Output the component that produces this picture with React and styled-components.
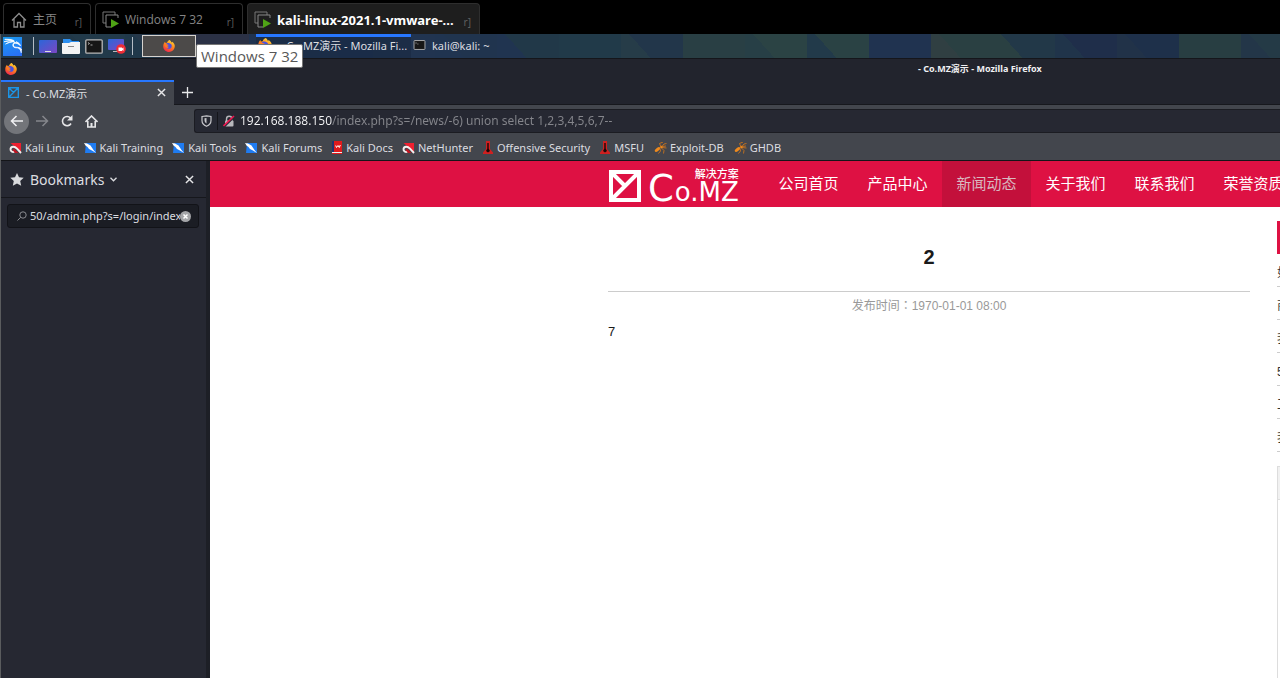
import React from "react";
import styled, { createGlobalStyle, css } from "styled-components";
import { SiKalilinux } from "react-icons/si";

const UI = '"Noto Sans", "Noto Sans CJK SC", sans-serif';
const HOST = '"Open Sans", "Noto Sans CJK SC", sans-serif';
const WEB = '"Liberation Sans", "Noto Sans CJK SC", sans-serif';

const GlobalStyle = createGlobalStyle`
  * { box-sizing: border-box; }
  body { margin: 0; background: #000; font-family: ${UI}; overflow: hidden; }
  button, input { font: inherit; color: inherit; border: 0; margin: 0; padding: 0; background: none; }
  h1, h2, p, ul { margin: 0; padding: 0; }
  ul { list-style: none; }
  a { color: inherit; text-decoration: none; }
  svg { display: block; flex: none; }
`;

/* ---------- host window ---------- */

const Screen = styled.div`
  display: flex;
  flex-direction: column;
  height: 100vh;
  min-height: 480px;
  overflow: hidden;
`;

const HostTabs = styled.nav`
  display: flex;
  flex: none;
  gap: 4px;
  height: 34px;
  padding: 3px 3px 0;
  background: #000;
  font-family: ${HOST};
`;

const HostTab = styled.button`
  display: flex;
  align-items: center;
  gap: 5px;
  width: ${(p) => p.$width}px;
  padding: 1px 8px 0 6px;
  border: 1px solid #2e2e2e;
  border-bottom: 0;
  border-radius: 4px 4px 0 0;
  background: ${(p) => (p.$active ? "#1e1e1e" : "#000")};
  color: ${(p) => (p.$active ? "#fff" : "#858585")};
  font-family: ${(p) => (p.$active ? UI : HOST)};
  font-size: ${(p) => (p.$active ? 13 : 12)}px;
  font-weight: ${(p) => (p.$active ? 700 : 400)};
  line-height: 30px;
  white-space: nowrap;
`;

const PinMark = styled.span`
  margin-left: auto;
  padding-top: 4px;
  color: #5e5e5e;
  font-size: 10px;
  font-weight: 400;
`;

/* ---------- guest desktop ---------- */

const Guest = styled.div`
  position: relative;
  display: flex;
  flex: 1;
  flex-direction: column;
  min-height: 0;
  border-left: 1px solid #5a5c5e;
  background: #23252e;
  color: #dcdde0;
`;

/* Wallpaper seen through the panel: each tile is split by a diagonal near its left edge. */
const tiles = [
  ["#22394a", "#22384a"], ["#213848", "#223a4a"], ["#20384a", "#26384a"],
  ["#2b3145", "#2b3145"], ["#203350", "#1f3350"], ["#1f3350", "#1e3252"],
  ["#1f3350", "#213450"], ["#203450", "#20344e"], ["#203450", "#213848"],
  ["#213a49", "#213a49"], ["#263c48", "#22364a"], ["#293f44", "#293f44"],
  ["#273f46", "#2b4344"], ["#223a4a", "#2a4244"], ["#203350", "#203350"],
  ["#303f42", "#2a4042"], ["#2a4042", "#223848"], ["#20344a", "#1f2e4a"],
  ["#213248", "#1e304a"], ["#283e42", "#283e42"], ["#233648", "#243a46"],
];

const Panel = styled.div`
  position: relative;
  display: flex;
  flex: none;
  align-items: center;
  height: 24px;
  font-size: 11px;
  background-color: #243a46;
  background-image: ${tiles.map(([l, r]) => `linear-gradient(48deg, ${l} 22px, ${r} 22px)`).join(", ")};
  background-size: 62px 24px;
  background-repeat: no-repeat;
  background-position: ${tiles.map((_, i) => `${i * 62}px 0`).join(", ")};
`;

const Launchers = styled.div`
  display: flex;
  align-items: center;
  width: 141px;
  padding-left: 2px;
`;

const KaliButton = styled.button`
  display: grid;
  place-items: center;
  width: 19px;
  height: 19px;
  margin-right: 11px;
  background: linear-gradient(160deg, #1a9bf0, #2a6cf5);
  color: #fff;
`;

const Divider = styled.span`
  width: 1px;
  height: 18px;
  background: #b4bcc4;
`;

const Apps = styled.div`
  display: flex;
  gap: 5px;
  padding: 0 6px 0 5px;
`;

const IconButton = styled.button`
  display: grid;
  place-items: center;
`;

const PagerButton = styled.button`
  display: grid;
  place-items: center;
  width: 54px;
  height: 22px;
  margin-right: 60px;
  border: 1px solid #d6d3cf;
  background: #4c4a49;
`;

const Task = styled.button`
  display: flex;
  align-items: center;
  gap: ${(p) => (p.$active ? 8 : 6)}px;
  height: 24px;
  padding: 0 0 2px 2px;
  white-space: nowrap;
  ${(p) => p.$active && css`
    width: 155px;
    background: rgba(20, 34, 54, 0.35);
    box-shadow: inset 0 3px #2777ff;
  `}
`;

const Tooltip = styled.div`
  position: absolute;
  z-index: 2;
  top: 10px;
  left: 195px;
  padding: 0 4px;
  border: 1px solid #767676;
  border-radius: 2px;
  background: #fff;
  color: #575757;
  font-family: ${HOST};
  font-size: 15px;
  line-height: 22px;
  white-space: nowrap;
`;

/* ---------- browser ---------- */

const TitleBar = styled.header`
  display: flex;
  flex: none;
  align-items: center;
  height: 22px;
  padding: 0 0 1px 4px;
  border-top: 1px solid #15161b;
  background: #22242d;
  white-space: nowrap;
`;

const WindowTitle = styled.h1`
  margin-left: 901px;
  color: #f0f0f2;
  font-size: 9px;
  font-weight: 700;
  line-height: 20px;
`;

const TabStrip = styled.div`
  display: flex;
  flex: none;
  height: 25px;
  border-bottom: 1px solid #17181d;
  background: #22242d;
`;

const BrowserTab = styled.div`
  display: flex;
  align-items: center;
  gap: 7px;
  width: 173px;
  height: 25px;
  padding: 0 8px 2px 7px;
  border-top: 2px solid #2777ff;
  background: #43464d;
  font-size: 11px;
`;

const TabLabel = styled.span`
  flex: 1;
`;

const NewTab = styled(IconButton)`
  width: 27px;
`;

const NavBar = styled.div`
  display: flex;
  flex: none;
  align-items: center;
  height: 32px;
  padding-left: 3px;
  background: #43464d;
`;

const NavButtons = styled.div`
  display: flex;
  align-items: center;
  gap: 12px;
  width: 190px;
`;

const BackButton = styled(IconButton)`
  width: 25px;
  height: 25px;
  margin-right: -6px;
  border-radius: 50%;
  background: #73757a;
`;

const AddressBar = styled.form`
  display: flex;
  flex: 1;
  align-items: center;
  height: 24px;
  padding-left: 6px;
  border: 1px solid #1b1c22;
  border-right: 0;
  border-radius: 3px 0 0 3px;
  background: #262832;
`;

const ShieldCell = styled.span`
  display: flex;
  align-items: center;
  width: 17px;
  height: 18px;
  margin-right: 5px;
  border-right: 1px solid #14151a;
`;

const Address = styled.input`
  flex: 1;
  min-width: 0;
  margin-left: 5px;
  outline: none;
  color: #f4f4f6;
  font-size: 12px;
  line-height: 20px;
  background: linear-gradient(to right, #f4f4f6 92px, #85868c 92px);
  background-clip: text;
  -webkit-text-fill-color: transparent;
`;

const BookmarksBar = styled.nav`
  display: flex;
  flex: none;
  gap: 9px;
  height: 24px;
  padding: 0 0 2px 8px;
  border-bottom: 1px solid #141519;
  background: #43464d;
  font-size: 11px;
`;

const Bookmark = styled.a`
  display: flex;
  align-items: center;
  gap: 3px;
  white-space: nowrap;
`;

const Body = styled.div`
  display: flex;
  flex: 1;
  min-height: 0;
`;

const Sidebar = styled.aside`
  flex: none;
  width: 209px;
  border-right: 4px solid #1d1f26;
  background: #262832;
`;

const SidebarHeader = styled.div`
  display: flex;
  align-items: center;
  height: 37px;
  padding: 0 12px 0 9px;
  border-bottom: 1px solid #16171c;
`;

const SidebarSwitch = styled.button`
  display: flex;
  flex: 1;
  align-items: center;
  gap: 6px;
  font-size: 14px;
`;

const SearchBox = styled.label`
  display: flex;
  align-items: center;
  height: 24px;
  margin: 6px 7px 6px 6px;
  padding: 0 7px 0 9px;
  border: 1px solid #121318;
  border-radius: 3px;
  background: #1b1d24;
`;

const SearchInput = styled.input`
  flex: 1;
  min-width: 0;
  margin-left: 3px;
  outline: none;
  font-size: 11px;
  line-height: 20px;
`;

/* ---------- web site ---------- */

const Page = styled.main`
  flex: 1;
  min-width: 0;
  overflow: hidden;
  background: #fff;
  color: #1a1a1a;
  font-family: ${WEB};
`;

const SiteHeader = styled.header`
  display: flex;
  align-items: center;
  height: 46px;
  padding-left: 398px;
  background: #de1143;
  color: #fff;
`;

const Logo = styled.a`
  display: flex;
  flex: none;
  align-items: center;
  gap: 7px;
  width: 156px;
  padding: 4px 0 0 1px;
`;

const Brand = styled.span`
  display: flex;
  align-items: last baseline;
  gap: 1px;
  font-family: "DejaVu Sans", "Noto Sans CJK SC", sans-serif;
`;

const Initial = styled.span`
  font-size: 37px;
  line-height: 33px;
`;

const BrandStack = styled.span`
  display: flex;
  flex-direction: column;
  font-size: 26px;
  line-height: 22px;
`;

const Tagline = styled.span`
  align-self: flex-end;
  font-size: 11px;
  font-weight: 500;
  line-height: 13px;
`;

const SiteNav = styled.nav`
  display: flex;
  height: 100%;
`;

const SiteLink = styled.a`
  flex: none;
  width: 89px;
  font-size: 15px;
  line-height: 46px;
  text-align: center;
  background: ${(p) => (p.$active ? "#c3103b" : "transparent")};
  color: ${(p) => (p.$active ? "#d9b9c0" : "#fff")};
`;

const Columns = styled.div`
  display: flex;
  align-items: flex-start;
  gap: 27px;
  padding: 14px 0 0 398px;
`;

const Article = styled.article`
  flex: none;
  width: 642px;
  padding-top: 22px;
`;

const Heading = styled.h2`
  padding-bottom: 20px;
  border-bottom: 1px solid #ccc;
  font-size: 20px;
  line-height: 28px;
  text-align: center;
`;

const Meta = styled.p`
  color: #999;
  font-family: "Liberation Sans", "Noto Sans CJK TC", sans-serif;
  font-size: 12px;
  line-height: 28px;
  text-align: center;
`;

const Content = styled.p`
  font-size: 13px;
  line-height: 24px;
`;

const Aside = styled.aside`
  flex: none;
  width: 283px;
`;

const AsideTitle = styled.div`
  height: 33px;
  background: #de1143;
`;

const AsideItem = styled.li`
  height: 33px;
  border-bottom: 1px dashed #ccc;
  color: #333;
  font-size: 12px;
  line-height: 39px;
`;

const AsideCard = styled.section`
  height: 300px;
  margin-top: 14px;
  border: 1px solid #ddd;
`;

const AsideCardHead = styled.div`
  height: 33px;
  border-bottom: 1px solid #ddd;
  background: #f1f1f1;
`;

/* ---------- drawings ---------- */

const HomeOutline = () => (
  <svg width="18" height="16" viewBox="-1 0 18 16" fill="none" stroke="#8c8c8c" strokeWidth="1.3">
    <path d="M1 8.500 8 1.500l7 7M3 7v8h3.500v-4.500h3V15H13V7" />
  </svg>
);

const VmIcon = () => (
  <svg width="18" height="18" viewBox="0 0 18 18">
    <path d="M13 4V1H1v11h3" fill="none" stroke="#777" />
    <path d="M16 7V4H4v12h5" fill="none" stroke="#888" />
    <path d="m9 8 8 4.500-8 4.500z" fill="#4fa316" />
  </svg>
);

const Firefox = ({ size = 12, id }) => (
  <svg width={size} height={size} viewBox="0 0 24 24">
    <defs>
      <linearGradient id={id} x1="0.8" y1="0" x2="0.3" y2="1">
        <stop offset="0" stopColor="#ffe23d" />
        <stop offset="0.45" stopColor="#ff8a1c" />
        <stop offset="1" stopColor="#f0284e" />
      </linearGradient>
    </defs>
    <path d="M13.500 0c2 2 3 3.500 3.500 5.200 1-.6 1.300-1.600 1.300-1.600C22 6 24 9.500 23.500 13.500 22.800 19.500 18 23.800 12 23.800S.5 19 .5 12.800C.5 9 1.800 5.500 4 3.500L5 6l3-.4c1-3 3-5 5.500-5.600z" fill={`url(#${id})`} />
    <path d="M6 9c.5-2.500 4-3.500 7-2.500 4 1.300 5.500 4.500 4 8-1.500 3-5 4-8 2.500-2-1-3-3-2.400-4.500 1.500 1 3.500.8 4.800-.4-2 .1-4.300-.8-5.400-3.100z" fill="#4a52e0" />
    <path d="M2 9c2-2 4-2 6-.5l3.500 1.500c-.5 1.200-2 1.500-3 1.800.5 2.200 1.500 3.200 3.500 2.700-2 2.500-6.500 1.500-8-2" fill="#ff7a20" />
  </svg>
);

const Desktop = () => (
  <svg width="18" height="15" viewBox="0 0 18 15">
    <defs>
      <linearGradient id="desk" x2="1" y2="1">
        <stop offset="0" stopColor="#2c66d8" />
        <stop offset="1" stopColor="#7b46c4" />
      </linearGradient>
    </defs>
    <rect y="1" width="18" height="13" rx="1" fill="url(#desk)" />
    <path d="M6 12.500h6" stroke="#ddd" />
  </svg>
);

const Folder = () => (
  <svg width="18" height="15" viewBox="0 0 18 15">
    <path d="M1 0h7l2 2h7v6H1z" fill="#2c8ff0" />
    <path d="M0 4h7l2-1h9v11a1 1 0 0 1-1 1H1a1 1 0 0 1-1-1z" fill="#f4f4f4" />
    <path d="M6 7.500h6" stroke="#888" />
  </svg>
);

const Terminal = ({ width = 18, height = 15 }) => (
  <svg width={width} height={height} viewBox="0 0 18 15">
    <rect x=".8" y=".8" width="16.400" height="13.400" rx="1" fill="#161616" stroke="#b9b9b9" strokeWidth="1.300" />
    <path d="m3 3.500 1.500 1L3 5.500M5.500 6h2" fill="none" stroke="#ccc" strokeWidth=".8" />
  </svg>
);

const Recorder = () => (
  <svg width="18" height="16" viewBox="0 0 18 16">
    <rect y="1" width="16" height="11" rx="1" fill="url(#desk)" />
    <path d="M5 13.500h5" stroke="#bbb" />
    <circle cx="13" cy="11" r="4.800" fill="#ee2c36" />
    <path d="M10.500 9.500h3.500v1l1.500-1v3.500l-1.500-1v1h-3.500z" fill="#fff" />
  </svg>
);

const SiteMark = ({ size, color, thick }) => (
  <svg width={size} height={size} viewBox="0 0 32 32" fill="none" stroke={color} strokeWidth={thick}>
    <path d="M2 2h28v28H2zM3 3l13 13M29 3 3 29" />
  </svg>
);

const Cross = () => (
  <svg width="9" height="9" viewBox="0 0 10 10" stroke="#e6e6e8" strokeWidth="1.600">
    <path d="m1 1 8 8M9 1 1 9" />
  </svg>
);

const Plus = () => (
  <svg width="11" height="11" viewBox="0 0 11 11" stroke="#e8e8ea" strokeWidth="1.300">
    <path d="M5.500 0v11M0 5.500h11" />
  </svg>
);

const Arrow = ({ color, flip }) => (
  <svg width="14" height="12" viewBox="0 0 14 12" fill="none" stroke={color} strokeWidth="1.500">
    <path d={flip ? "M1 6h11.500M7.500 1l5 5-5 5" : "M13 6H1.500M6.500 1l-5 5 5 5"} />
  </svg>
);

const Reload = () => (
  <svg width="12" height="12" viewBox="0 0 12 12" fill="none" stroke="#e6e6e8" strokeWidth="1.600">
    <path d="M10 8.500A4.600 4.600 0 1 1 9.500 3" />
    <path d="M11.500 0v5.500H6z" fill="#e6e6e8" stroke="none" />
  </svg>
);

const Home = () => (
  <svg width="13" height="13" viewBox="0 0 13 13" fill="none" stroke="#e6e6e8" strokeWidth="1.600">
    <path d="m.5 7 6-6 6 6M2.800 6v6h7.400V6" />
    <path d="M6.500 12V8" strokeWidth="2" />
  </svg>
);

const Shield = () => (
  <svg width="11" height="12" viewBox="0 0 11 12" fill="none" stroke="#c8c8cc" strokeWidth="1.200">
    <path d="M1 1.500 5.500.8l4.500.7v4c0 3-2 4.800-4.500 5.800C3 10.300 1 8.500 1 5.500z" />
    <path d="M5.500 3v5.500C4 7.500 3.500 6.500 3.500 5V3.300z" fill="#c8c8cc" stroke="none" />
  </svg>
);

const BrokenLock = () => (
  <svg width="12" height="12" viewBox="0 0 12 12">
    <path d="M3.500 6V4a2.700 2.700 0 0 1 5.400 0v2" fill="none" stroke="#b8b8bc" strokeWidth="1.400" />
    <rect x="2" y="5.500" width="8.500" height="6" rx="1" fill="#b8b8bc" />
    <path d="M1.500 11.500 12 1.500" stroke="#262832" strokeWidth="1.500" />
    <path d="M.5 11 11 1" stroke="#ee1650" strokeWidth="1.600" />
  </svg>
);

const Star = () => (
  <svg width="14" height="13" viewBox="0 0 14 13">
    <path d="m7 0 2 4.300 4.700.5-3.500 3.200 1 4.700L7 10.400l-4.200 2.300 1-4.700L.3 4.800 5 4.300z" fill="#d9dadd" />
  </svg>
);

const Chevron = () => (
  <svg width="7" height="5" viewBox="0 0 7 5" fill="none" stroke="#dcdde0" strokeWidth="1.300">
    <path d="m.5.8 3 3 3-3" />
  </svg>
);

const Lens = () => (
  <svg width="10" height="10" viewBox="0 0 10 10" fill="none" stroke="#8b8c91">
    <circle cx="6" cy="4" r="3.200" />
    <path d="M3.700 6.300.5 9.500" />
  </svg>
);

const ClearIcon = () => (
  <svg width="11" height="11" viewBox="0 0 11 11">
    <circle cx="5.500" cy="5.500" r="5.500" fill="#a4a5a8" />
    <path d="m3.500 3.500 4 4M7.500 3.500l-4 4" stroke="#fff" strokeWidth="1.500" />
  </svg>
);

const KaliRed = () => (
  <svg width="13" height="12" viewBox="0 0 13 12">
    <path d="M1.500 1H12v9z" fill="#ee2030" />
    <path d="M12 11 8 6.700C5.500 4 2 4.200 1.500 7c-.3 2.500 2.500 3.700 4.500 2.300" fill="none" stroke="#f6eeee" strokeWidth="1.900" />
    <path d="M5 6.500 9.500 11H6L3.500 8z" fill="#c01522" />
  </svg>
);

const KaliBlue = () => (
  <svg width="13" height="12" viewBox="0 0 13 12">
    <path d="M2 1h10v10H1z" fill="#1f7cf2" />
    <path d="m0 1 3 .5 3.500 2L9.500 8l2.500 3-4-2.500L5 7 3.500 5 1.500 3.500z" fill="#fff" />
  </svg>
);

const DocsIcon = () => (
  <svg width="12" height="13" viewBox="0 0 12 13">
    <rect x="1" width="10" height="13" fill="#e01a1c" />
    <rect x="1" width="2" height="11" fill="#23356e" />
    <rect x="1" y="11" width="10" height="1" fill="#eee" />
    <path d="M9.300 4 8.300 6.500 7 4.500 5.500 6.500l-.8-2" fill="none" stroke="#fff" />
  </svg>
);

const OffsecIcon = () => (
  <svg width="12" height="13" viewBox="-1 0 12 13">
    <path d="M3 0h4v8l3 3.500V13H0v-1.500L3 8z" fill="#cf2020" />
    <path d="M4.300 2h1.400v5.500L7 10 5 11.500 3 10l1.300-2.500z" fill="#190708" />
  </svg>
);

const BugIcon = () => (
  <svg width="14" height="12" viewBox="-1 0 14 12">
    <ellipse cx="3.500" cy="7.500" rx="3.200" ry="1.500" transform="rotate(-38 3.500 7.500)" fill="#f08a1d" />
    <circle cx="7.500" cy="5" r="1.300" fill="#f08a1d" />
    <path d="M7 5 5.500 1.500 9 0M8 4.500 10 2l2.500-.5M8 5.500l4.500.5M7.500 6l2.500 2.500-.5 3M6 6.500 6.500 9l-2 2.500M8.500 4.500 12 4" fill="none" stroke="#d97a18" strokeWidth=".8" />
  </svg>
);

const bookmarks = [
  ["Kali Linux", KaliRed], ["Kali Training", KaliBlue], ["Kali Tools", KaliBlue],
  ["Kali Forums", KaliBlue], ["Kali Docs", DocsIcon], ["NetHunter", KaliRed],
  ["Offensive Security", OffsecIcon], ["MSFU", OffsecIcon], ["Exploit-DB", BugIcon], ["GHDB", BugIcon],
];

const siteLinks = ["公司首页", "产品中心", "新闻动态", "关于我们", "联系我们", "荣誉资质"];
const asideItems = ["如", "商", "我", "5", "工", "我"];

export default function App() {
  return (
    <Screen>
      <GlobalStyle />
      <HostTabs aria-label="Virtual machines">
        <HostTab $width={88}><HomeOutline />主页<PinMark>r]</PinMark></HostTab>
        <HostTab $width={148}><VmIcon />Windows 7 32<PinMark>r]</PinMark></HostTab>
        <HostTab $width={233} $active><VmIcon />kali-linux-2021.1-vmware-...<PinMark>r]</PinMark></HostTab>
      </HostTabs>
      <Guest>
        <Panel>
          <Launchers>
            <KaliButton aria-label="Applications"><SiKalilinux size={18} stroke="#fff" strokeWidth={1} /></KaliButton>
            <Divider />
            <Apps>
              <IconButton aria-label="Show desktop"><Desktop /></IconButton>
              <IconButton aria-label="Files"><Folder /></IconButton>
              <IconButton aria-label="Terminal"><Terminal /></IconButton>
              <IconButton aria-label="Screen recorder"><Recorder /></IconButton>
            </Apps>
            <Divider />
          </Launchers>
          <PagerButton aria-label="Workspace"><Firefox id="fox-pager" /></PagerButton>
          <Task $active><Firefox id="fox-task" size={14} />- Co.MZ演示 - Mozilla Fi...</Task>
          <Task><Terminal width={13} height={10} />kali@kali: ~</Task>
          <Tooltip role="tooltip">Windows 7 32</Tooltip>
        </Panel>
        <TitleBar>
          <Firefox id="fox-title" />
          <WindowTitle>- Co.MZ演示 - Mozilla Firefox</WindowTitle>
        </TitleBar>
        <TabStrip>
          <BrowserTab>
            <SiteMark size={11} color="#1b95e8" thick={4} />
            <TabLabel>- Co.MZ演示</TabLabel>
            <IconButton aria-label="Close tab"><Cross /></IconButton>
          </BrowserTab>
          <NewTab aria-label="New tab"><Plus /></NewTab>
        </TabStrip>
        <NavBar>
          <NavButtons>
            <BackButton aria-label="Back"><Arrow color="#f0f0f2" /></BackButton>
            <IconButton aria-label="Forward"><Arrow color="#85878c" flip /></IconButton>
            <IconButton aria-label="Reload"><Reload /></IconButton>
            <IconButton aria-label="Home"><Home /></IconButton>
          </NavButtons>
          <AddressBar>
            <ShieldCell><Shield /></ShieldCell>
            <BrokenLock />
            <Address aria-label="Address" type="text" defaultValue="192.168.188.150/index.php?s=/news/-6) union select 1,2,3,4,5,6,7--" />
          </AddressBar>
        </NavBar>
        <BookmarksBar aria-label="Bookmarks">
          {bookmarks.map(([name, Icon]) => (
            <Bookmark href="#" key={name}><Icon />{name}</Bookmark>
          ))}
        </BookmarksBar>
        <Body>
          <Sidebar>
            <SidebarHeader>
              <SidebarSwitch><Star />Bookmarks<Chevron /></SidebarSwitch>
              <IconButton aria-label="Close sidebar"><Cross /></IconButton>
            </SidebarHeader>
            <SearchBox>
              <Lens />
              <SearchInput aria-label="Search bookmarks" type="text" defaultValue="50/admin.php?s=/login/index" />
              <IconButton aria-label="Clear search"><ClearIcon /></IconButton>
            </SearchBox>
          </Sidebar>
          <Page>
            <SiteHeader>
              <Logo href="#">
                <SiteMark size={32} color="#fff" thick={4} />
                <Brand>
                  <Initial>C</Initial>
                  <BrandStack><Tagline>解决方案</Tagline>o.MZ</BrandStack>
                </Brand>
              </Logo>
              <SiteNav>
                {siteLinks.map((t, i) => <SiteLink href="#" key={t} $active={i === 2}>{t}</SiteLink>)}
              </SiteNav>
            </SiteHeader>
            <Columns>
              <Article>
                <Heading>2</Heading>
                <Meta>发布时间：1970-01-01 08:00</Meta>
                <Content>7</Content>
              </Article>
              <Aside>
                <AsideTitle />
                <ul>{asideItems.map((t, i) => <AsideItem key={i}>{t}</AsideItem>)}</ul>
                <AsideCard><AsideCardHead /></AsideCard>
              </Aside>
            </Columns>
          </Page>
        </Body>
      </Guest>
    </Screen>
  );
}
